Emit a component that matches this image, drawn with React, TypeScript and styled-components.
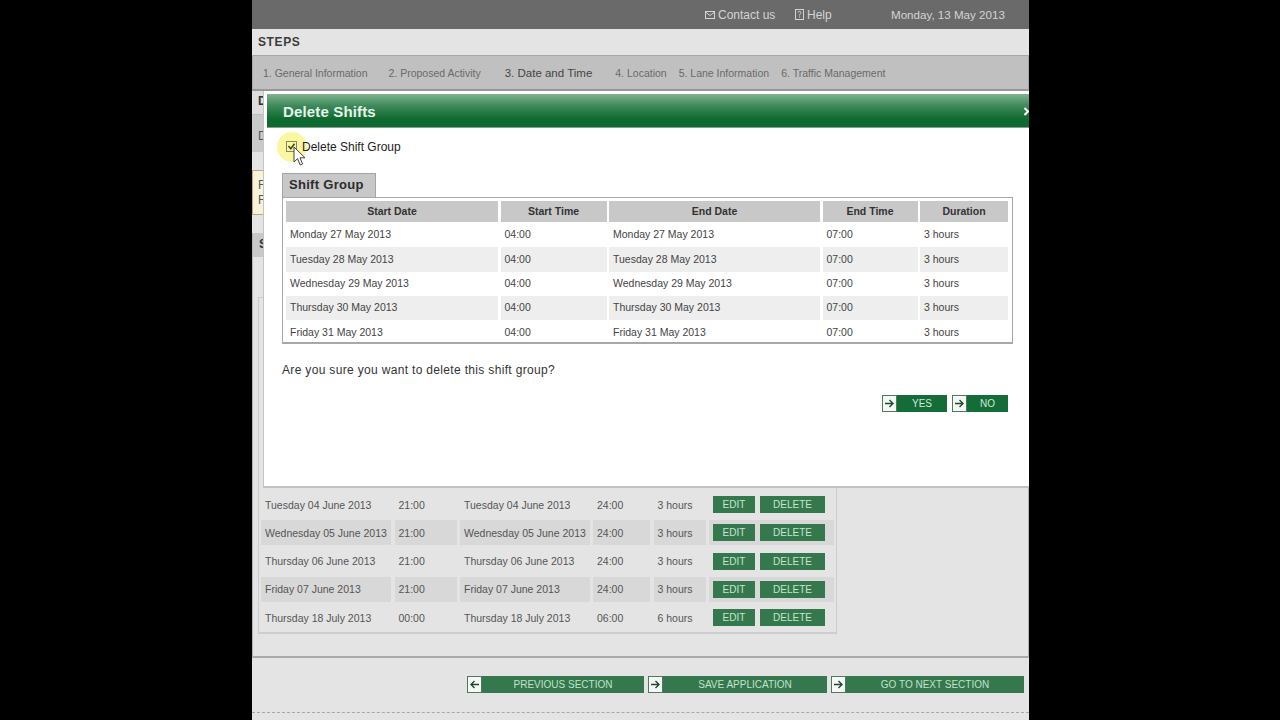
import React from "react";
import styled, { createGlobalStyle } from "styled-components";

const Global = createGlobalStyle`
  html, body { margin: 0; padding: 0; background: #000; height: 100%; overflow: hidden; }
  body { font-family: "Liberation Sans", Arial, sans-serif; }
`;

const Page = styled.div`
  position: relative;
  width: 777px;
  height: 720px;
  margin-left: 252px;
  background: #e4e4e4;
  overflow: hidden;
  display: flex;
  flex-direction: column;
`;

const TopBar = styled.header`
  height: 29px;
  flex: none;
  background: #6a6a6a;
  color: #d4d4d4;
  font-size: 12px;
  display: flex;
  align-items: center;
  padding-left: 453px;
`;
const TopLink = styled.span<{ $w: number }>`
  width: ${(p) => p.$w}px;
  display: flex;
  align-items: center;
  gap: 3px;
  flex: none;
  white-space: nowrap;
`;
const TopDate = styled.span`
  font-size: 11.6px;
  white-space: nowrap;
`;

const StepsTitle = styled.div`
  height: 26px;
  flex: none;
  display: flex;
  align-items: center;
  padding-left: 6px;
  font-size: 12px;
  font-weight: bold;
  letter-spacing: 0.6px;
  color: #3c3c3c;
`;
const StepsNav = styled.nav`
  height: 36px;
  box-sizing: border-box;
  flex: none;
  background: #c0c0c0;
  border: 1px solid #a8a8a8;
  border-bottom: 2px solid #989898;
  display: flex;
  align-items: center;
  padding-left: 10px;
`;
const Step = styled.span<{ $active?: boolean; $ml: number }>`
  margin-left: ${(p) => p.$ml}px;
  font-size: ${(p) => (p.$active ? "11.5px" : "10.5px")};
  color: ${(p) => (p.$active ? "#444" : "#6a6a6a")};
  white-space: nowrap;
`;

const SectionHead = styled.div`
  height: 24px;
  flex: none;
  box-sizing: border-box;
  background: #dedede;
  border-bottom: 1px solid #bdbdbd;
  padding: 3px 0 0 6px;
  font-size: 12px;
  font-weight: bold;
  color: #333;
`;
const SectionRow = styled.div`
  height: 37px;
  flex: none;
  background: #c9c9c9;
  padding: 14px 0 0 6px;
  box-sizing: border-box;
  font-size: 12px;
  color: #555;
`;
const Alert = styled.div`
  margin-top: 18px;
  height: 45px;
  flex: none;
  box-sizing: border-box;
  background: #f6f4d8;
  border: 1px solid #c9a08a;
  padding: 7px 0 0 5px;
  font-size: 12px;
  line-height: 15px;
  color: #555;
`;
const Panel = styled.section`
  margin-top: 18px;
  height: 425px;
  flex: none;
  box-sizing: border-box;
  border: 1px solid #b4b4b4;
  border-top: none;
  border-bottom: 2px solid #aaa;
  display: flex;
  flex-direction: column;
`;
const PanelHead = styled.div`
  height: 24px;
  flex: none;
  background: #c8c8c8;
  font-size: 12px;
  font-weight: bold;
  padding: 4px 0 0 6px;
  box-sizing: border-box;
  color: #333;
`;
const ListBox = styled.div`
  margin: 40px 0 0 5px;
  width: 579px;
  height: 337px;
  box-sizing: border-box;
  border: 1px solid #cdcdcd;
  border-bottom-width: 2px;
  padding: 0 2px 2px 2px;
  display: flex;
  flex-direction: column;
  justify-content: flex-end;
  gap: 3.2px;
`;
const ListRow = styled.div<{ $alt?: boolean }>`
  display: grid;
  grid-template-columns: 130px 62px 129.5px 57px 52px 1fr;
  column-gap: 3.5px;
  height: 25px;
  font-size: 10.5px;
  color: #555;
  & > * { background: ${(p) => (p.$alt ? "#d8d8d8" : "transparent")}; }
`;
const ListCell = styled.div`
  display: flex;
  align-items: center;
  padding-left: 4px;
  white-space: nowrap;
  overflow: hidden;
`;
const Actions = styled.div`
  display: flex;
  align-items: center;
  gap: 5px;
  padding-left: 4px;
`;
const GreenSmall = styled.span<{ $w: number }>`
  width: ${(p) => p.$w}px;
  height: 17px;
  background: #36784e;
  color: #c4e6cf;
  font-size: 10px;
  display: flex;
  align-items: center;
  justify-content: center;
`;

const Footer = styled.div`
  margin-top: 18px;
  display: flex;
  justify-content: flex-end;
  gap: 4px;
  padding-right: 5px;
  flex: none;
`;
const IconBtn = styled.button<{ $w: number; $fill?: string; $fg?: string }>`
  width: ${(p) => p.$w}px;
  height: 17px;
  padding: 0;
  border: none;
  background: ${(p) => p.$fill || "#36784e"};
  color: ${(p) => p.$fg || "#c0e2cb"};
  font: 10px "Liberation Sans", Arial, sans-serif;
  display: flex;
  align-items: center;
  flex: none;
`;
const IconBox = styled.span`
  width: 15px;
  height: 17px;
  box-sizing: border-box;
  border: 1px solid #4d7a5e;
  background: #f6f8f6;
  display: flex;
  align-items: center;
  justify-content: center;
  flex: none;
`;
const BtnLabel = styled.span`
  flex: 1;
  text-align: center;
`;
const Dashed = styled.div`
  margin-top: 19px;
  border-top: 1px dashed #a8a8a8;
  flex: none;
`;

const Modal = styled.div`
  position: absolute;
  left: 11px;
  right: 0;
  top: 91px;
  height: 397px;
  box-sizing: border-box;
  background: #fff;
  border-left: 1px solid #c4c4c4;
  border-bottom: 2px solid #c2c2c2;
  padding-top: 3px;
  display: flex;
  flex-direction: column;
`;
const ModalHead = styled.div`
  margin-left: 3px;
  height: 34px;
  flex: none;
  box-sizing: border-box;
  background: linear-gradient(#7fb48e 0%, #3f8a5c 35%, #0f6a30 75%, #0d6a30 100%);
  border-bottom: 1px solid #8a9a8e;
  display: flex;
  align-items: center;
  justify-content: space-between;
  padding: 2px 0 0 16px;
  color: #e6f4ea;
  font-size: 15px;
  letter-spacing: 0.15px;
  font-weight: bold;
`;
const ModalBody = styled.div`
  padding: 10px 16px 0 18px;
  display: flex;
  flex-direction: column;
`;
const CheckRow = styled.label`
  position: relative;
  height: 18px;
  display: flex;
  align-items: center;
  font-size: 12px;
  color: #222;
  padding-left: 20px;
`;
const Spot = styled.span`
  position: absolute;
  left: -5px;
  top: -6px;
  width: 30px;
  height: 30px;
  border-radius: 50%;
  background: #fbf7a0;
`;
const CheckBox = styled.svg`
  position: absolute;
  left: 4px;
  top: 3px;
`;
const Pointer = styled.svg`
  position: absolute;
  left: 11px;
  top: 8px;
`;
const CheckText = styled.span`
  position: relative;
`;
const Tab = styled.div`
  margin-top: 17px;
  width: 94px;
  height: 24px;
  box-sizing: border-box;
  background: #c8c8c8;
  border: 1px solid #a4a4a4;
  border-bottom: none;
  padding-left: 6px;
  font-size: 13px;
  line-height: 22px;
  font-weight: bold;
  letter-spacing: 0.3px;
  color: #2c2c2c;
`;
const ShiftBox = styled.div`
  width: 731px;
  height: 147px;
  box-sizing: border-box;
  border: 1px solid #a8a8a8;
  border-bottom-width: 2px;
  padding: 3px 3px 0;
`;
const ShiftRow = styled.div<{ $head?: boolean; $alt?: boolean }>`
  display: grid;
  grid-template-columns: 212px 106px 211px 95px 88px;
  column-gap: 2.5px;
  height: ${(p) => (p.$head ? "21px" : "24.35px")};
  font-size: 10.5px;
  font-weight: ${(p) => (p.$head ? "bold" : "normal")};
  color: ${(p) => (p.$head ? "#333" : "#444")};
  margin-bottom: ${(p) => (p.$head ? "1px" : "0")};
  & > * {
    background: ${(p) => (p.$head ? "#c8c8c8" : p.$alt ? "#eeeeee" : "transparent")};
    justify-content: ${(p) => (p.$head ? "center" : "flex-start")};
    padding-left: ${(p) => (p.$head ? "0" : "4px")};
  }
`;
const ShiftCell = styled.div`
  display: flex;
  align-items: center;
  white-space: nowrap;
  padding-bottom: 2px;
  box-sizing: border-box;
`;
const Question = styled.p`
  margin: 18px 0 0;
  font-size: 12px;
  line-height: 16px;
  letter-spacing: 0.33px;
  color: #333;
`;
const Choices = styled.div`
  margin-top: 17px;
  display: flex;
  justify-content: flex-end;
  gap: 5px;
  padding-right: 5px;
`;

const Arrow = ({ left }: { left?: boolean }) => (
  <svg width="11" height="11" viewBox="0 0 11 11" fill="none" stroke="#1f4a30" strokeWidth="1.4">
    {left ? (
      <path d="M10 5.5H2M5.5 2L2 5.5 5.5 9" />
    ) : (
      <path d="M1 5.5H9M5.5 2L9 5.5 5.5 9" />
    )}
  </svg>
);

const shifts = [
  "Monday 27 May 2013",
  "Tuesday 28 May 2013",
  "Wednesday 29 May 2013",
  "Thursday 30 May 2013",
  "Friday 31 May 2013",
];

const list = [
  ["Tuesday 04 June 2013", "21:00", "24:00", "3 hours"],
  ["Wednesday 05 June 2013", "21:00", "24:00", "3 hours"],
  ["Thursday 06 June 2013", "21:00", "24:00", "3 hours"],
  ["Friday 07 June 2013", "21:00", "24:00", "3 hours"],
  ["Thursday 18 July 2013", "00:00", "06:00", "6 hours"],
];

export default function App() {
  return (
    <>
      <Global />
      <Page>
        <TopBar>
          <TopLink $w={90}>
            <svg width="10" height="8" viewBox="0 0 10 8" fill="none" stroke="#d4d4d4">
              <rect x="0.5" y="0.5" width="9" height="7" />
              <path d="M1 1.5L5 4.5 9 1.5" />
            </svg>
            Contact us
          </TopLink>
          <TopLink $w={96}>
            <svg width="9" height="11" viewBox="0 0 9 11" fill="none" stroke="#d4d4d4">
              <rect x="0.5" y="0.5" width="8" height="10" />
              <path d="M3 3.5C3 2 6 2 6 3.7 6 5 4.5 5 4.5 6.5M4.5 7.5V8.5" />
            </svg>
            Help
          </TopLink>
          <TopDate>Monday, 13 May 2013</TopDate>
        </TopBar>
        <StepsTitle>STEPS</StepsTitle>
        <StepsNav>
          <Step $ml={0}>1. General Information</Step>
          <Step $ml={21}>2. Proposed Activity</Step>
          <Step $ml={24} $active>
            3. Date and Time
          </Step>
          <Step $ml={23}>4. Location</Step>
          <Step $ml={12}>5. Lane Information</Step>
          <Step $ml={12}>6. Traffic Management</Step>
        </StepsNav>
        <SectionHead>D</SectionHead>
        <SectionRow>D</SectionRow>
        <Alert>
          F
          <br />F
        </Alert>
        <Panel>
          <PanelHead>S</PanelHead>
          <ListBox>
            {list.map((r, i) => (
              <ListRow key={i} $alt={i % 2 === 1}>
                <ListCell>{r[0]}</ListCell>
                <ListCell>{r[1]}</ListCell>
                <ListCell>{r[0]}</ListCell>
                <ListCell>{r[2]}</ListCell>
                <ListCell>{r[3]}</ListCell>
                <Actions>
                  <GreenSmall $w={42}>EDIT</GreenSmall>
                  <GreenSmall $w={65}>DELETE</GreenSmall>
                </Actions>
              </ListRow>
            ))}
          </ListBox>
        </Panel>
        <Footer>
          <IconBtn $w={177}>
            <IconBox>
              <Arrow left />
            </IconBox>
            <BtnLabel>PREVIOUS SECTION</BtnLabel>
          </IconBtn>
          <IconBtn $w={179}>
            <IconBox>
              <Arrow />
            </IconBox>
            <BtnLabel>SAVE APPLICATION</BtnLabel>
          </IconBtn>
          <IconBtn $w={193}>
            <IconBox>
              <Arrow />
            </IconBox>
            <BtnLabel>GO TO NEXT SECTION</BtnLabel>
          </IconBtn>
        </Footer>
        <Dashed />
        <Modal>
          <ModalHead>
            Delete Shifts
            <svg width="5" height="9" viewBox="0 0 5 9" fill="none" stroke="#fff" strokeWidth="2">
              <path d="M0.5 1L4 4.5 0.5 8" />
            </svg>
          </ModalHead>
          <ModalBody>
            <CheckRow>
              <Spot />
              <CheckBox width="11" height="11" viewBox="0 0 11 11" fill="none">
                <rect x="0.5" y="0.5" width="10" height="10" stroke="#8a8460" />
                <path d="M2.5 5L4.8 7.8 8.5 2.8" stroke="#3a4a20" strokeWidth="1.6" />
              </CheckBox>
              <CheckText>Delete Shift Group</CheckText>
              <Pointer width="13" height="21" viewBox="0 0 13 21">
                <path
                  d="M1 1V16L4.6 12.6 7.2 19 9.6 18 7 11.8H12Z"
                  fill="#fff"
                  stroke="#444"
                  strokeWidth="1"
                />
              </Pointer>
            </CheckRow>
            <Tab>Shift Group</Tab>
            <ShiftBox>
              <ShiftRow $head>
                <ShiftCell>Start Date</ShiftCell>
                <ShiftCell>Start Time</ShiftCell>
                <ShiftCell>End Date</ShiftCell>
                <ShiftCell>End Time</ShiftCell>
                <ShiftCell>Duration</ShiftCell>
              </ShiftRow>
              {shifts.map((s, i) => (
                <ShiftRow key={i} $alt={i % 2 === 1}>
                  <ShiftCell>{s}</ShiftCell>
                  <ShiftCell>04:00</ShiftCell>
                  <ShiftCell>{s}</ShiftCell>
                  <ShiftCell>07:00</ShiftCell>
                  <ShiftCell>3 hours</ShiftCell>
                </ShiftRow>
              ))}
            </ShiftBox>
            <Question>Are you sure you want to delete this shift group?</Question>
            <Choices>
              <IconBtn $w={65} $fill="#146c38" $fg="#cfe9d6">
                <IconBox>
                  <Arrow />
                </IconBox>
                <BtnLabel>YES</BtnLabel>
              </IconBtn>
              <IconBtn $w={56} $fill="#146c38" $fg="#cfe9d6">
                <IconBox>
                  <Arrow />
                </IconBox>
                <BtnLabel>NO</BtnLabel>
              </IconBtn>
            </Choices>
          </ModalBody>
        </Modal>
      </Page>
    </>
  );
}
